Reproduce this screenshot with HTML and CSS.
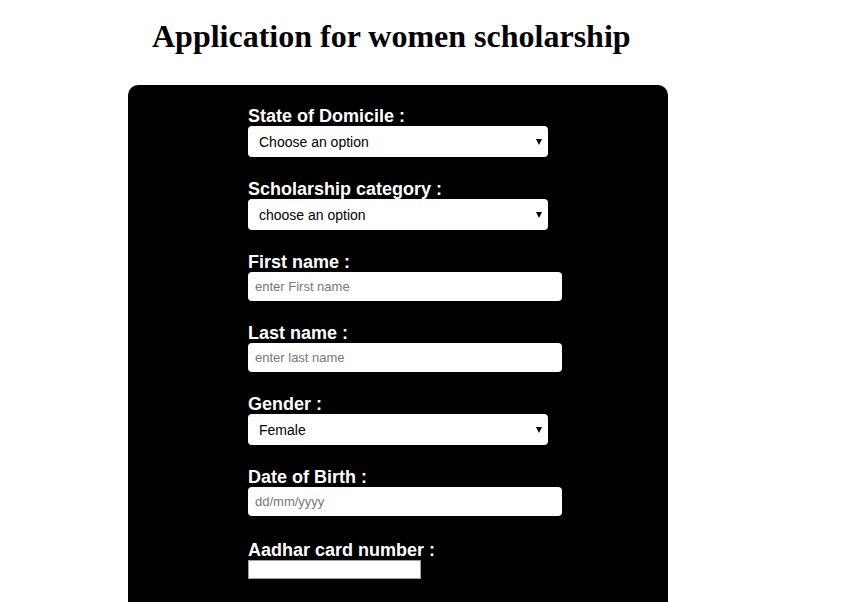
FILE: index.html
```html
<!DOCTYPE html>
<html>
<head>
<meta charset="utf-8">
<title>Application for women scholarship</title>
<link rel="stylesheet" href="styles.css">
</head>
<body>
<div class="page">
  <h1 class="title">Application for women scholarship</h1>
  <form class="panel">
    <div class="field">
      <label class="label">State of Domicile :</label>
      <div class="select-wrap">
        <select class="select"><option>Choose an option</option></select>
      </div>
    </div>
    <div class="field">
      <label class="label">Scholarship category :</label>
      <div class="select-wrap">
        <select class="select"><option>choose an option</option></select>
      </div>
    </div>
    <div class="field">
      <label class="label">First name :</label>
      <input class="text" type="text" placeholder="enter First name">
    </div>
    <div class="field">
      <label class="label">Last name :</label>
      <input class="text" type="text" placeholder="enter last name">
    </div>
    <div class="field">
      <label class="label">Gender :</label>
      <div class="select-wrap">
        <select class="select"><option>Female</option></select>
      </div>
    </div>
    <div class="field">
      <label class="label">Date of Birth :</label>
      <input class="text" type="text" placeholder="dd/mm/yyyy">
    </div>
    <div class="field field-last">
      <label class="label">Aadhar card number :</label>
      <input class="plain" type="text">
    </div>
  </form>
</div>
</body>
</html>
```

FILE: styles.css
```css
html, body {
  margin: 0;
  padding: 0;
  background: #fff;
}

.page {
  padding: 18px 0 0 128px;
}

.title {
  margin: 0 0 31px 24px;
  font-family: "Liberation Serif", "Times New Roman", serif;
  font-weight: bold;
  font-size: 32px;
  line-height: 36px;
  color: #000;
}

.panel {
  width: 540px;
  min-height: 517px;
  background: #000;
  border-radius: 10px 10px 0 0;
  box-sizing: border-box;
  padding: 21px 0 0 120px;
  display: flex;
  flex-direction: column;
  gap: 22px;
}

.field {
  display: flex;
  flex-direction: column;
  align-items: flex-start;
}

.field-last {
  margin-top: 2px;
}

.label {
  font-family: "Liberation Sans", Arial, sans-serif;
  font-weight: bold;
  font-size: 18px;
  line-height: 20px;
  color: #fff;
}

.select-wrap {
  position: relative;
  width: 300px;
}

.select-wrap::after {
  content: "";
  position: absolute;
  right: 6px;
  top: 13px;
  border-left: 3.5px solid transparent;
  border-right: 3.5px solid transparent;
  border-top: 6px solid #000;
  pointer-events: none;
}

.select {
  -webkit-appearance: none;
  appearance: none;
  display: block;
  width: 300px;
  height: 31px;
  margin: 0;
  border: 0;
  border-radius: 4px;
  background: #fff;
  padding: 0 0 0 11px;
  font-family: "Liberation Sans", Arial, sans-serif;
  font-size: 14px;
  color: #000;
}

.text {
  display: block;
  width: 314px;
  height: 29px;
  margin: 0;
  box-sizing: border-box;
  border: 0;
  border-radius: 4px;
  background: #fff;
  padding: 0 0 0 7px;
  font-family: "Liberation Sans", Arial, sans-serif;
  font-size: 13px;
  color: #000;
}

.text::placeholder {
  color: #777;
}

.plain {
  display: block;
  width: 173px;
  height: 19px;
  margin: 0;
  box-sizing: border-box;
  border: 1px solid #a0a0a0;
  border-radius: 0;
  background: #fff;
  padding: 0 2px;
  font-family: "Liberation Sans", Arial, sans-serif;
  font-size: 13px;
}
```
